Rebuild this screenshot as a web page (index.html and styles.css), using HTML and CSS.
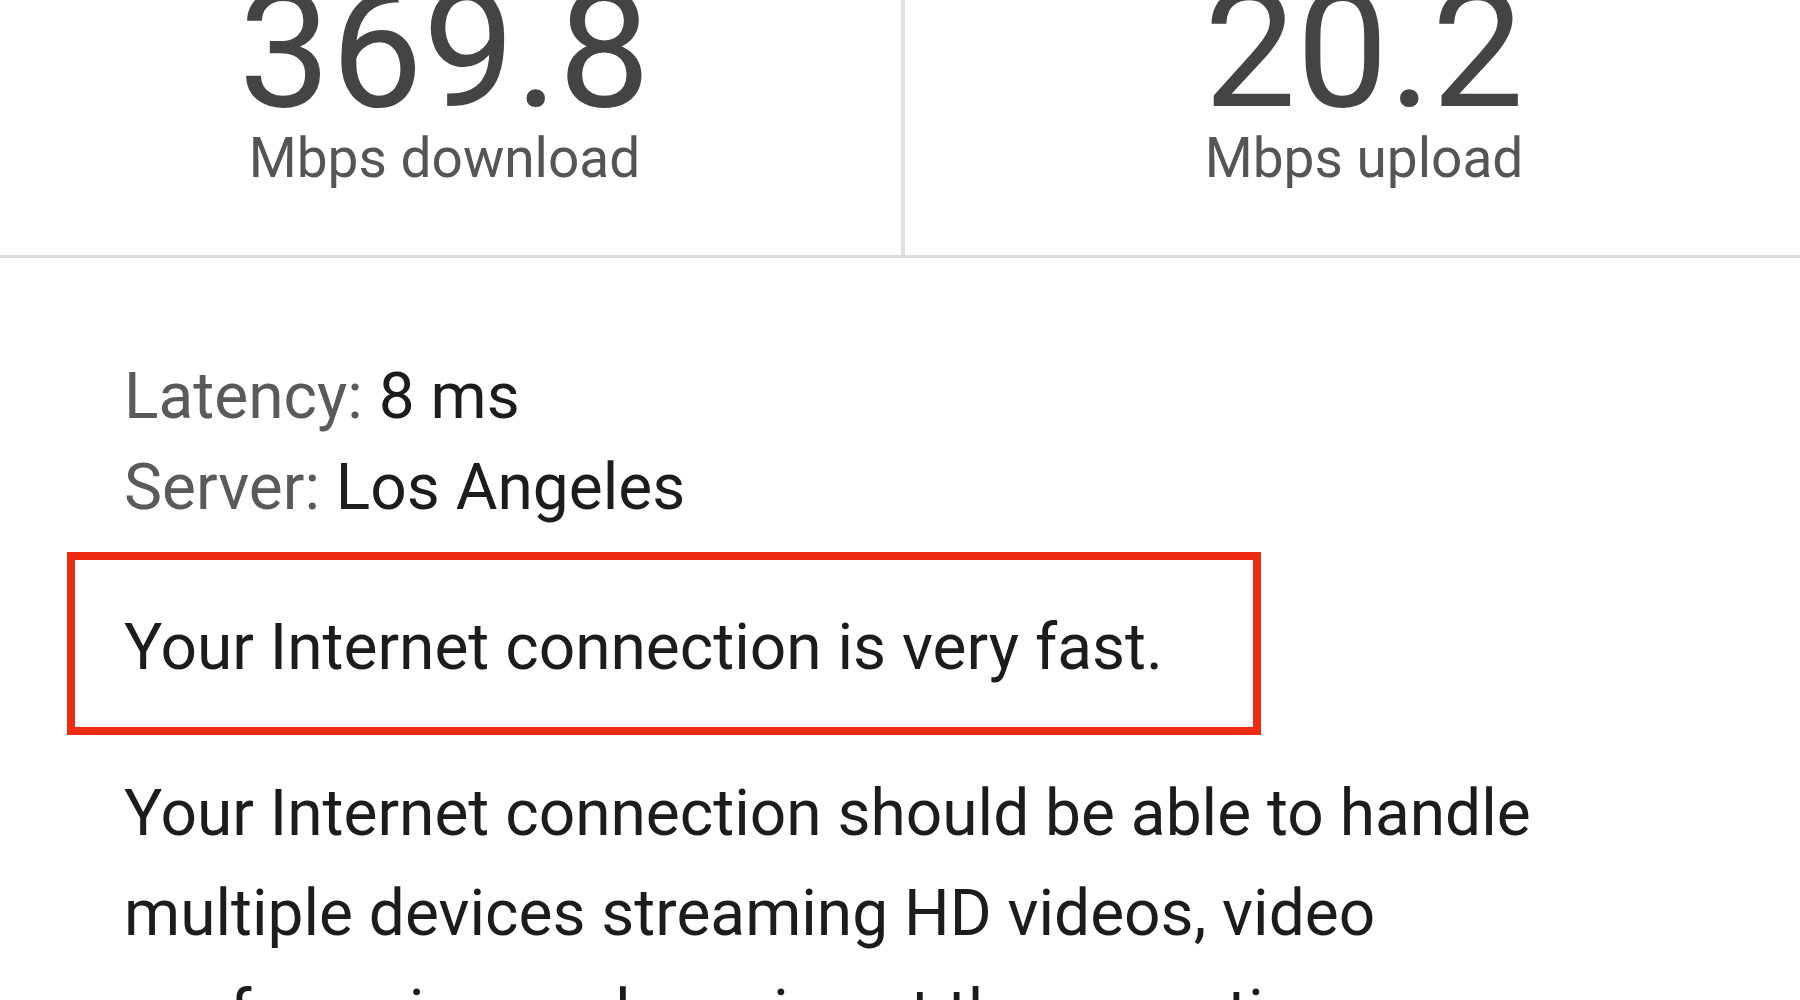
FILE: index.html
```html
<!DOCTYPE html>
<html lang="en">
<head>
<meta charset="utf-8">
<title>Speed test result</title>
<link rel="stylesheet" href="styles.css">
</head>
<body>
<div class="page">
  <div class="stats">
    <div class="stat stat-down">
      <div class="stat-value">369.8</div>
      <div class="stat-label">Mbps download</div>
    </div>
    <div class="stat stat-up">
      <div class="stat-value">20.2</div>
      <div class="stat-label">Mbps upload</div>
    </div>
  </div>
  <div class="info">
    <div class="meta">
      <div class="meta-row"><span class="meta-key">Latency:</span> <span class="meta-val">8 ms</span></div>
      <div class="meta-row"><span class="meta-key">Server:</span> <span class="meta-val">Los Angeles</span></div>
    </div>
    <div class="verdict">Your Internet connection is very fast.</div>
    <p class="desc">Your Internet connection should be able to handle multiple devices streaming HD videos, video conferencing, and gaming at the same time.</p>
  </div>
</div>
</body>
</html>
```

FILE: styles.css
```css
html, body {
  margin: 0;
  padding: 0;
  background: #ffffff;
}

body {
  font-family: Roboto, "Noto Sans", "Liberation Sans", sans-serif;
  color: #202124;
  overflow: hidden;
}

.page {
  width: 1800px;
  height: 1000px;
  overflow: hidden;
}

.stats {
  display: grid;
  grid-template-columns: 905px 1fr;
  height: 255px;
  border-bottom: 3px solid #dcdcdc;
}

.stat {
  display: flex;
  flex-direction: column;
  align-items: center;
  text-align: center;
}

.stat-down {
  border-right: 4px solid #e0e0e0;
  padding-right: 12px;
}

.stat-up {
  padding-left: 23px;
}

.stat-value {
  font-size: 164px;
  line-height: 100px;
  color: #444444;
  white-space: nowrap;
}

.stat-label {
  font-size: 55px;
  line-height: 64px;
  margin-top: 26px;
  color: #555555;
  white-space: nowrap;
}

.info {
  padding-left: 124px;
  padding-top: 93px;
}

.meta-row {
  font-size: 64px;
  line-height: 91px;
  white-space: nowrap;
}

.meta-key {
  color: #5a5a5a;
}

.meta-val {
  color: #1c1c1c;
}

.verdict {
  margin-top: 19px;
  margin-left: -57px;
  width: 1194px;
  height: 183px;
  box-sizing: border-box;
  border: 8px solid #ee2b12;
  padding: 42px 0 0 49px;
  font-size: 64px;
  line-height: 91px;
  color: #1c1c1c;
  white-space: nowrap;
}

.desc {
  margin: 29px 0 0 0;
  width: 1450px;
  font-size: 64px;
  line-height: 100px;
  color: #1c1c1c;
}
```
